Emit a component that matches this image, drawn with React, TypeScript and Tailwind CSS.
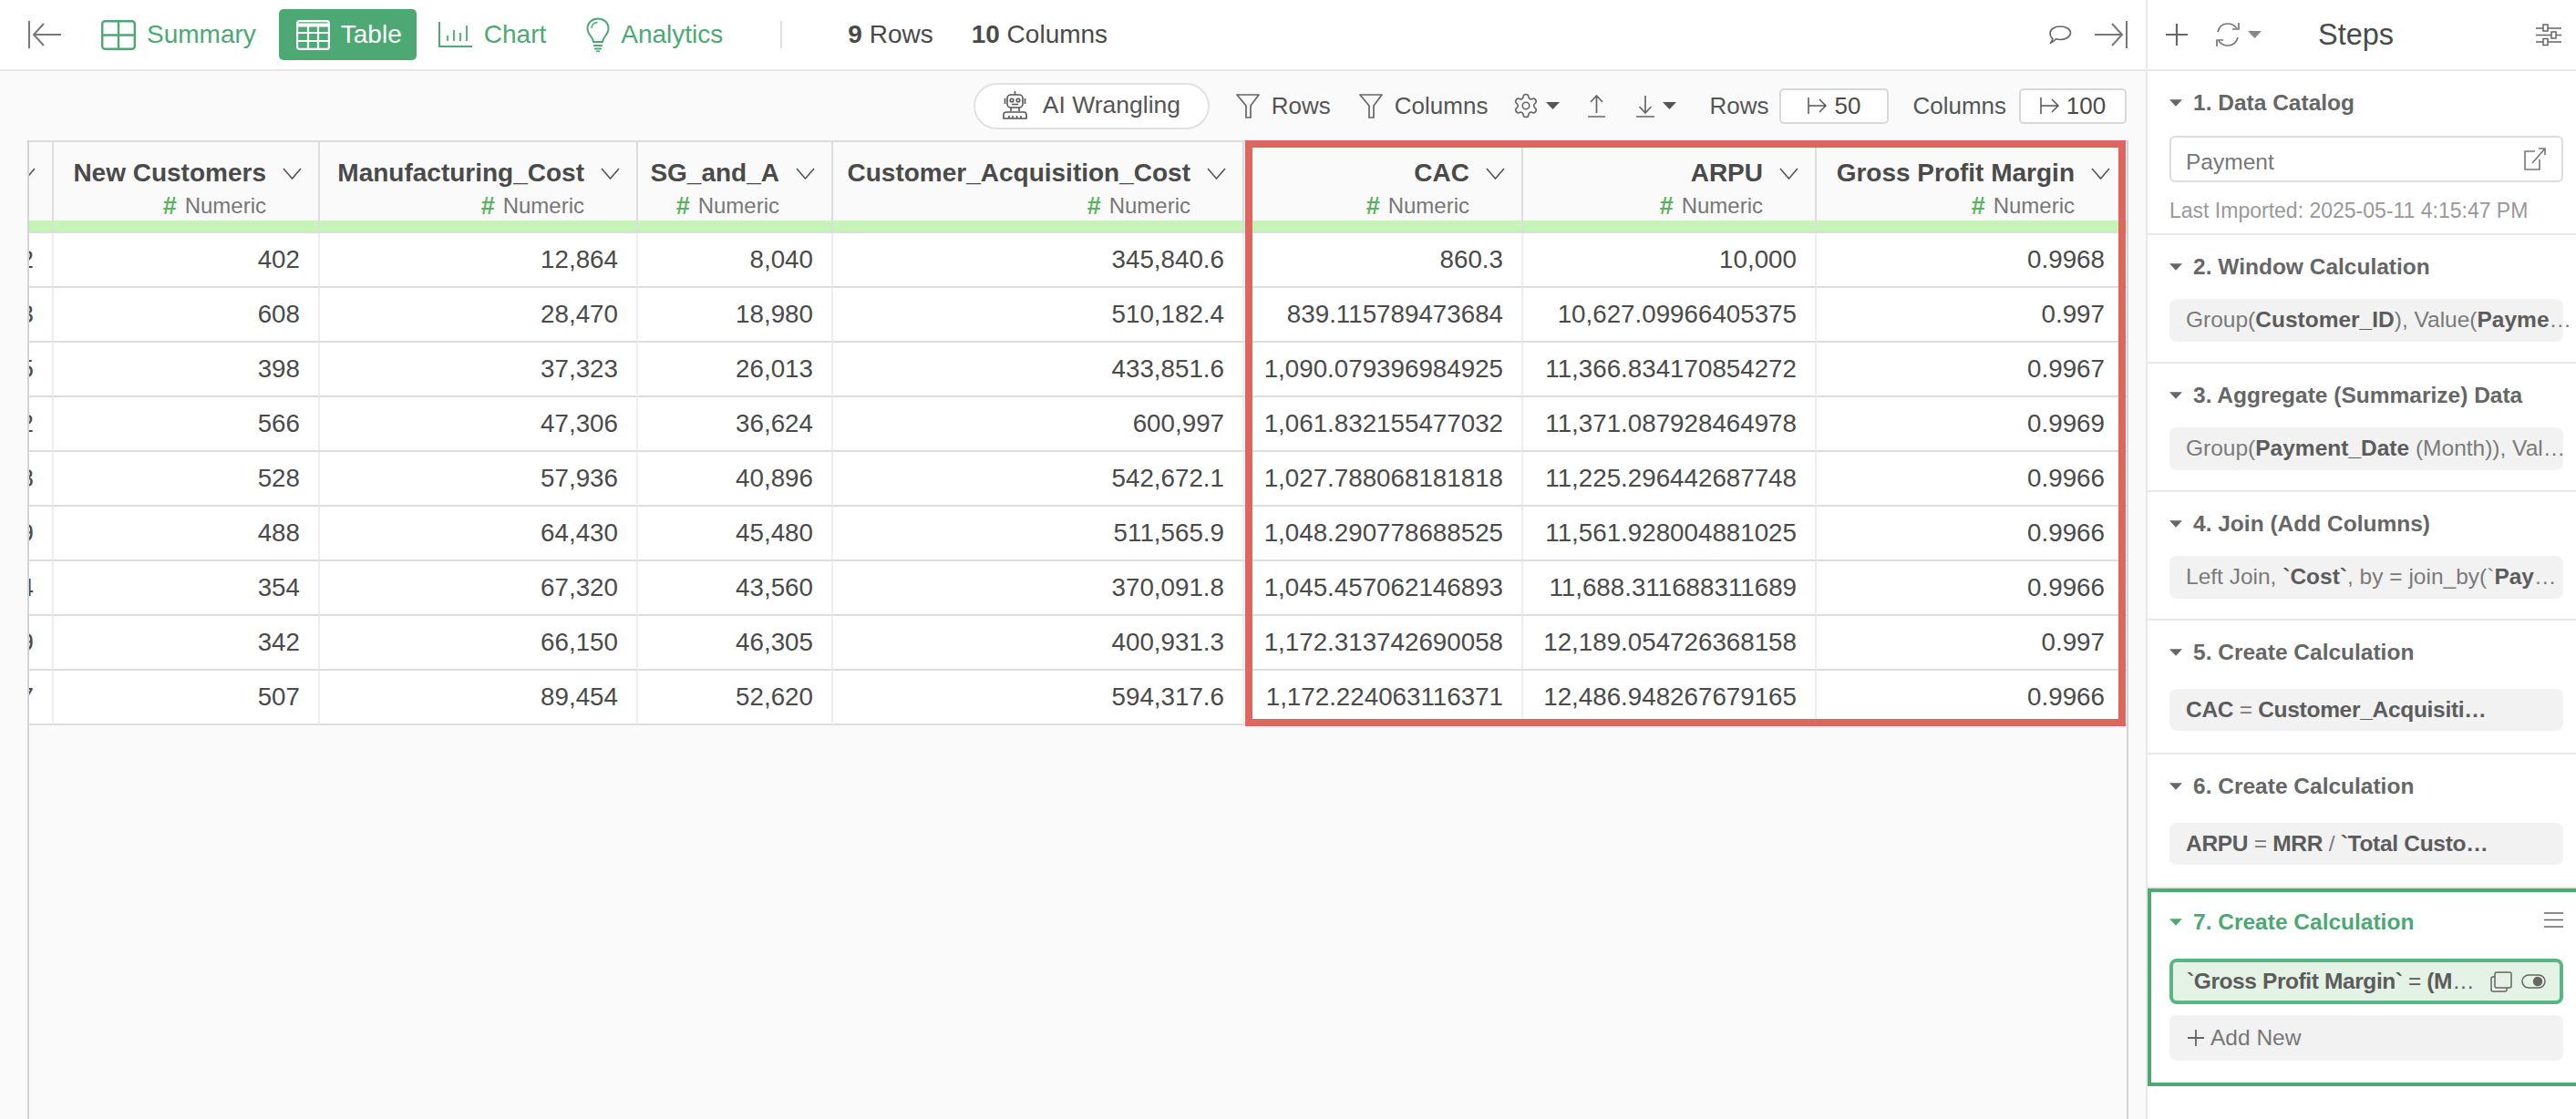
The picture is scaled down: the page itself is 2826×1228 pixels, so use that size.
import type { ReactNode } from "react"

const GREEN = "#4da874"
const GRAY = "#666666"

const columns = [
  { name: "", values: ["2", "3", "5", "2", "8", "9", "4", "9", "7"] },
  { name: "New Customers", values: ["402", "608", "398", "566", "528", "488", "354", "342", "507"] },
  { name: "Manufacturing_Cost", values: ["12,864", "28,470", "37,323", "47,306", "57,936", "64,430", "67,320", "66,150", "89,454"] },
  { name: "SG_and_A", values: ["8,040", "18,980", "26,013", "36,624", "40,896", "45,480", "43,560", "46,305", "52,620"] },
  { name: "Customer_Acquisition_Cost", values: ["345,840.6", "510,182.4", "433,851.6", "600,997", "542,672.1", "511,565.9", "370,091.8", "400,931.3", "594,317.6"] },
  {
    name: "CAC",
    values: ["860.3", "839.115789473684", "1,090.079396984925", "1,061.832155477032", "1,027.788068181818", "1,048.290778688525", "1,045.457062146893", "1,172.313742690058", "1,172.224063116371"],
  },
  {
    name: "ARPU",
    values: ["10,000", "10,627.09966405375", "11,366.834170854272", "11,371.087928464978", "11,225.296442687748", "11,561.928004881025", "11,688.311688311689", "12,189.054726368158", "12,486.948267679165"],
  },
  { name: "Gross Profit Margin", values: ["0.9968", "0.997", "0.9967", "0.9969", "0.9966", "0.9966", "0.9966", "0.997", "0.9966"] },
]

const rowIndexes = [0, 1, 2, 3, 4, 5, 6, 7, 8]

function Caret({ color = GRAY, w = 15, h = 8 }: { color?: string; w?: number; h?: number }) {
  return (
    <svg width={w} height={h} viewBox="0 0 15 8" className="shrink-0">
      <path d="M0 0H15L7.5 8Z" fill={color} />
    </svg>
  )
}

function Chevron() {
  return (
    <svg width="21" height="13" viewBox="0 0 21 13" fill="none" stroke="#555" strokeWidth="1.6" className="shrink-0">
      <path d="M1 1L10.5 12L20 1" />
    </svg>
  )
}

function Funnel({ w = 26 }: { w?: number }) {
  return (
    <svg width={w} height="27" viewBox="0 0 26 27" fill="none" stroke="#666" strokeWidth="1.7" className="shrink-0">
      <path d="M1 1H25L16 13V26H11V13Z" strokeLinejoin="round" />
    </svg>
  )
}

function RunArrow() {
  return (
    <svg width="21" height="18" viewBox="0 0 21 18" fill="none" stroke="#555" strokeWidth="1.5" className="shrink-0">
      <path d="M1 0V18M1 9H20M13 2L20 9L13 16" />
    </svg>
  )
}

function LimitBox({ value, className }: { value: string; className: string }) {
  return (
    <div className={`flex h-[39px] items-center justify-center gap-[8px] rounded-[5px] border-2 border-[#d8d8d8] bg-white text-[26px] text-[#4a4a4a] ${className}`}>
      <RunArrow />
      <span>{value}</span>
    </div>
  )
}

function TopBar() {
  return (
    <div className="flex h-[78px] shrink-0 items-center border-b-2 border-[#e8e8e8] bg-white pl-[31px] pr-[20px]">
      <svg width="36" height="30" viewBox="0 0 36 30" fill="none" stroke="#777" strokeWidth="2" className="shrink-0">
        <path d="M1 0V30M36 15H6M17 3L6 15L17 27" />
      </svg>
      <div className="ml-[44px] flex items-center gap-[12px] text-[28px] text-[#4da874]">
        <svg width="38" height="33" viewBox="0 0 38 33" fill="none" stroke={GREEN} strokeWidth="2.4">
          <rect x="1.2" y="1.2" width="35.6" height="30.6" rx="3" />
          <path d="M19 1V32M1 16.5H37" />
        </svg>
        <span>Summary</span>
      </div>
      <div className="ml-[25px] flex h-[56px] w-[151px] items-center gap-[12px] rounded-[5px] bg-[#4da874] pl-[19px] text-[28px] text-white">
        <svg width="37" height="33" viewBox="0 0 37 33" fill="none" stroke="#fff" strokeWidth="2.2">
          <rect x="1.1" y="1.1" width="34.8" height="30.800" rx="2.500" />
          <path d="M1 5.500H36" strokeWidth="4" />
          <path d="M13 6V32M24 6V32M1 14H36M1 23H36" />
        </svg>
        <span>Table</span>
      </div>
      <div className="ml-[24px] flex items-center gap-[13px] text-[28px] text-[#4da874]">
        <svg width="37" height="28" viewBox="0 0 37 28" fill="none" stroke={GREEN} strokeWidth="2">
          <path d="M1 0V27H37" />
          <path d="M10 21V15M17 21V9M24 21V12M31 21V4" strokeWidth="1.800" />
        </svg>
        <span>Chart</span>
      </div>
      <div className="ml-[44px] flex items-center gap-[12px] text-[28px] text-[#4da874]">
        <svg width="26" height="38" viewBox="0 0 26 38" fill="none" stroke={GREEN} strokeWidth="2">
          <path d="M8 27C8 22 1.500 19 1.500 12.500C1.500 6 6.500 1.500 13 1.500C19.500 1.500 24.500 6 24.500 12.500C24.500 19 18 22 18 27Z" />
          <path d="M6 12C6 8 9 5.500 12.500 5.500" strokeWidth="1.500" />
          <path d="M8 31H18M9 34.500H17M11 37.500H15" />
        </svg>
        <span>Analytics</span>
      </div>
      <div className="ml-[63px] h-[30px] w-[2px] bg-[#e0e0e0]" />
      <div className="ml-[72px] text-[28px] text-[#4a4a4a]">
        <b>9</b> Rows
      </div>
      <div className="ml-[42px] text-[28px] text-[#4a4a4a]">
        <b>10</b> Columns
      </div>
      <svg width="26" height="21" viewBox="0 0 26 21" fill="none" stroke="#666" strokeWidth="1.600" className="ml-auto shrink-0">
        <path d="M5 14.500C3 13 2 11 2 8.500C2 4.500 6.500 1 13 1C19.500 1 24.500 4 24.500 8C24.500 12 19.500 15.500 13.500 15.500C11.500 15.500 10 15.200 8.500 14.800C7 16.500 5 18.500 2 19.500C3.500 18 4.500 16.500 5 14.500Z" />
      </svg>
      <svg width="36" height="30" viewBox="0 0 36 30" fill="none" stroke="#777" strokeWidth="2" className="ml-[25px] shrink-0">
        <path d="M35 0V30M0 15H30M19 3L30 15L19 27" />
      </svg>
    </div>
  )
}

function DataToolbar() {
  return (
    <div className="flex h-[76px] shrink-0 items-center justify-end pr-[21px] text-[26px] text-[#555]">
      <div className="mr-[29px] flex h-[51px] w-[259px] items-center gap-[17px] rounded-full border-2 border-[#e2e2e2] bg-white pb-[1px] pl-[30px] text-[26.500px]">
        <svg width="27" height="31" viewBox="0 0 27 31" fill="none" stroke="#555" strokeWidth="1.600" className="shrink-0">
          <path d="M13.500 0V4" />
          <rect x="5" y="4" width="17" height="14" rx="4" />
          <circle cx="10" cy="10" r="1.800" />
          <circle cx="17" cy="10" r="1.800" />
          <path d="M10 14.500H17M2.500 8V14M24.500 8V14M9 18V22M18 18V22" />
          <path d="M1 30V26C1 24 2.500 23 4 23H23C24.500 23 26 24 26 26V30Z" />
          <path d="M7 27V30M11 27V30M15.500 27V30M20 27V30" />
        </svg>
        <span>AI Wrangling</span>
      </div>
      <Funnel />
      <span className="ml-[13px]">Rows</span>
      <div className="ml-[31px]">
        <Funnel />
      </div>
      <span className="ml-[13px]">Columns</span>
      <svg width="30" height="30" viewBox="0 0 24 24" fill="none" stroke="#666" strokeWidth="1.300" className="ml-[27px] shrink-0">
        <path d="M9.671 4.136a2.34 2.34 0 0 1 4.659 0 2.34 2.34 0 0 0 3.319 1.915 2.34 2.34 0 0 1 2.33 4.033 2.34 2.34 0 0 0 0 3.831 2.34 2.34 0 0 1-2.33 4.033 2.34 2.34 0 0 0-3.319 1.915 2.34 2.34 0 0 1-4.659 0 2.34 2.34 0 0 0-3.32-1.915 2.34 2.34 0 0 1-2.33-4.033 2.34 2.34 0 0 0 0-3.831A2.34 2.34 0 0 1 6.35 6.051a2.34 2.34 0 0 0 3.319-1.915" />
        <circle cx="12" cy="12" r="3" />
      </svg>
      <div className="ml-[7px]">
        <Caret color="#555" />
      </div>
      <svg width="19" height="25" viewBox="0 0 19 25" fill="none" stroke="#666" strokeWidth="1.700" className="ml-[31px] shrink-0">
        <path d="M0 24H19M9.500 20V1M3 8L9.500 1L16 8" />
      </svg>
      <svg width="20" height="25" viewBox="0 0 20 25" fill="none" stroke="#666" strokeWidth="1.700" className="ml-[34px] shrink-0">
        <path d="M0 24H20M10 1V20M3.500 13L10 20L16.500 13" />
      </svg>
      <div className="ml-[9px]">
        <Caret color="#555" />
      </div>
      <span className="ml-[36px]">Rows</span>
      <LimitBox value="50" className="ml-[12px] w-[120px]" />
      <span className="ml-[26px]">Columns</span>
      <LimitBox value="100" className="ml-[14px] w-[118px]" />
    </div>
  )
}

function HeaderCell({ name, last }: { name: string; last: boolean }) {
  return (
    <div className={`flex h-[86px] flex-col items-end overflow-hidden bg-[#fafafa] pr-[18px] pt-[17px] ${last ? "" : "border-r-2 border-[#dddddd]"}`}>
      <div className="flex h-[34px] items-center gap-[18px] whitespace-nowrap text-[28px] font-bold text-[#4a4a4a]">
        {name && <span>{name}</span>}
        <Chevron />
      </div>
      {name && (
        <div className="mr-[39px] mt-[4px] flex h-[30px] items-center gap-[9px] text-[24px] text-[#777777]">
          <span className="text-[27px] font-bold text-[#5cb160]">#</span>
          <span>Numeric</span>
        </div>
      )}
    </div>
  )
}

function DataTable() {
  return (
    <div className="border-t-2 border-[#dddddd] bg-white">
      <div className="grid grid-cols-[27px_292px_349px_214px_451px_306px_322px_340px]">
        {columns.map((col, i) => (
          <HeaderCell key={i} name={col.name} last={i === columns.length - 1} />
        ))}
        {columns.map((_, i) => (
          <div key={i} className={`h-[14px] border-b-2 border-[#dddddd] bg-[#c4f5b6] ${i === columns.length - 1 ? "" : "border-r-2"}`} />
        ))}
        {rowIndexes.map((r) =>
          columns.map((col, i) => (
            <div
              key={`${r}-${i}`}
              className={`flex h-[60px] items-center justify-end overflow-hidden whitespace-nowrap border-b-2 border-b-[#dddddd] text-[27.750px] text-[#4a4a4a] ${i === columns.length - 1 ? "pr-[24px]" : "border-r-2 border-r-[#eeeeee] pr-[20px]"}`}
            >
              {col.values[r]}
            </div>
          )),
        )}
      </div>
    </div>
  )
}

function StepTitle({ children, color = "#666666", extra }: { children: ReactNode; color?: string; extra?: ReactNode }) {
  return (
    <div className="flex h-[30px] items-center gap-[12px]">
      <Caret color={color} w={14} h={8} />
      <span className="text-[24.500px] font-bold" style={{ color }}>
        {children}
      </span>
      {extra}
    </div>
  )
}

function Step({ title, tall = false, children }: { title: string; tall?: boolean; children: ReactNode }) {
  return (
    <div className={`border-b-2 border-[#e8e8e8] pl-[24px] pr-[14px] pt-[20px] ${tall ? "pb-[24px]" : "pb-[22px]"}`}>
      <StepTitle>{title}</StepTitle>
      <div
        className={`flex items-center whitespace-nowrap rounded-[8px] bg-[#f2f2f2] pl-[18px] text-[24.500px] text-[#7a7a7a] [&_b]:text-[#5c5c5c] ${tall ? "mt-[25px] h-[46px] tracking-[-0.3px]" : "mt-[20px] h-[47px]"}`}
      >
        <span>{children}</span>
      </div>
    </div>
  )
}

function StepsPanel() {
  return (
    <div className="flex w-[472px] shrink-0 flex-col border-l-2 border-[#e8e8e8] bg-white">
      <div className="flex h-[78px] shrink-0 items-center border-b-2 border-[#e8e8e8] pl-[20px] pr-[16px]">
        <svg width="24" height="24" viewBox="0 0 24 24" fill="none" stroke="#666" strokeWidth="2.200" className="shrink-0">
          <path d="M12 0V24M0 12H24" />
        </svg>
        <svg width="28" height="28" viewBox="0 0 28 28" fill="none" stroke="#777" strokeWidth="1.700" className="ml-[30px] shrink-0">
          <path d="M3 11C4.500 5 9 2 14 2C18 2 21.500 4 24 7M26 1V8H19" />
          <path d="M25 17C23.500 23 19 26 14 26C10 26 6.500 24 4 21M2 27V20H9" />
        </svg>
        <div className="ml-[8px]">
          <Caret color="#888" />
        </div>
        <span className="ml-[62px] text-[32.500px] text-[#4a4a4a]">Steps</span>
        <svg width="28" height="25" viewBox="0 0 28 25" fill="none" stroke="#666" strokeWidth="1.500" className="ml-auto shrink-0">
          <path d="M0 5H28M0 12.500H28M0 20H28" />
          <rect x="8" y="1" width="5" height="7" fill="#fff" />
          <rect x="17" y="9" width="5" height="7" fill="#fff" />
          <rect x="8" y="16.500" width="5" height="7" fill="#fff" />
        </svg>
      </div>

      <div className="border-b-2 border-[#e8e8e8] pb-[10px] pl-[24px] pr-[14px] pt-[20px]">
        <StepTitle>1. Data Catalog</StepTitle>
        <div className="mt-[21px] flex h-[51px] items-center justify-between rounded-[6px] border-2 border-[#dddddd] pl-[16px] pr-[17px] text-[24.500px] text-[#777777]">
          <span className="pt-[7px]">Payment</span>
          <svg width="25" height="25" viewBox="0 0 25 25" fill="none" stroke="#777" strokeWidth="1.600">
            <path d="M13 4H2V24H18V13M10 17L24 1M17 1H24V8" />
          </svg>
        </div>
        <div className="mt-[16px] flex h-[30px] items-center whitespace-nowrap text-[23px] text-[#999999]">Last Imported: 2025-05-11 4:15:47 PM</div>
      </div>

      <Step title="2. Window Calculation">
        Group(<b>Customer_ID</b>), Value(<b>Payme</b>…
      </Step>
      <Step title="3. Aggregate (Summarize) Data">
        Group(<b>Payment_Date</b> (Month)), Val…
      </Step>
      <Step title="4. Join (Add Columns)">
        Left Join, <b>`Cost`</b>, by = join_by(`<b>Pay</b>…
      </Step>
      <Step title="5. Create Calculation" tall>
        <b>CAC</b> = <b>Customer_Acquisiti…</b>
      </Step>
      <Step title="6. Create Calculation" tall>
        <b>ARPU</b> = <b>MRR</b> / <b>`Total Custo…</b>
      </Step>

      <div className="h-[217px] border-y-4 border-l-4 border-[#4da874] pl-[20px] pr-[14px] pt-[18px]">
        <StepTitle
          color={GREEN}
          extra={
            <svg width="21" height="17" viewBox="0 0 21 17" fill="none" stroke="#666" strokeWidth="1.500" className="ml-auto -translate-y-[3px]">
              <path d="M0 1H21M0 8.500H21M0 16H21" />
            </svg>
          }
        >
          7. Create Calculation
        </StepTitle>
        <div className="mt-[25px] flex h-[50px] items-center rounded-[8px] border-4 border-[#5ab585] bg-[#e5f3e6] pl-[15px] pr-[15px] text-[24.500px] text-[#5c5c5c]">
          <span className="whitespace-nowrap tracking-[-0.4px]">
            <b>`Gross Profit Margin`</b> = <b>(M</b>…
          </span>
          <svg width="24" height="23" viewBox="0 0 24 23" fill="none" stroke="#666" strokeWidth="1.500" className="ml-auto shrink-0">
            <rect x="5" y="1" width="18" height="17" rx="2" />
            <path d="M5 6H3C2 6 1 7 1 8V20C1 21 2 22 3 22H16C17 22 18 21 18 20V18" />
          </svg>
          <svg width="27" height="16" viewBox="0 0 27 16" fill="none" stroke="#666" strokeWidth="1.500" className="ml-[10px] shrink-0">
            <rect x="1" y="1" width="25" height="14" rx="7" />
            <circle cx="18" cy="8" r="4.500" fill="#666" />
          </svg>
        </div>
        <div className="mt-[12px] flex h-[50px] items-center gap-[7px] rounded-[8px] bg-[#f2f2f2] pl-[20px] text-[24.500px] text-[#777777]">
          <svg width="18" height="18" viewBox="0 0 18 18" fill="none" stroke="#666" strokeWidth="1.800" className="shrink-0">
            <path d="M9 0V18M0 9H18" />
          </svg>
          <span>Add New</span>
        </div>
      </div>
    </div>
  )
}

export default function App() {
  return (
    <div className="flex h-[1228px] w-[2826px] overflow-hidden bg-[#fafafa] font-['Liberation_Sans',Arial,sans-serif]">
      <div className="flex min-w-0 flex-1 flex-col">
        <TopBar />
        <DataToolbar />
        <div className="relative ml-[30px] mr-[19px] flex-1 border-x-2 border-[#d4d4d4]">
          <DataTable />
          {/* highlight drawn over the last three columns */}
          <div className="pointer-events-none absolute left-[1334px] top-0 h-[643px] w-[966px] border-[8px] border-[#dd665f]" />
        </div>
      </div>
      <StepsPanel />
    </div>
  )
}
